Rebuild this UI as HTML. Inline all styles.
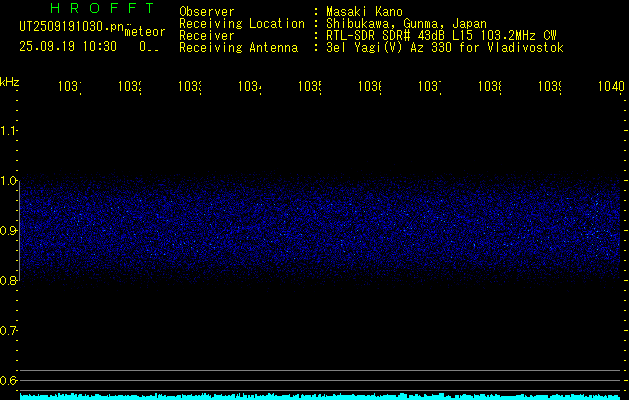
<!DOCTYPE html>
<html><head><meta charset="utf-8"><style>
html,body{margin:0;padding:0;background:#000;}
body{width:629px;height:400px;position:relative;overflow:hidden;}
svg{position:absolute;left:0;top:0;}
</style></head><body>
<svg width="629" height="400" viewBox="0 0 629 400">
<defs>
<linearGradient id="bm" x1="0" y1="160" x2="0" y2="295" gradientUnits="userSpaceOnUse"><stop offset="0.0000" stop-color="rgb(76,76,76)"/><stop offset="0.0296" stop-color="rgb(76,76,76)"/><stop offset="0.0519" stop-color="rgb(82,82,82)"/><stop offset="0.0741" stop-color="rgb(114,114,114)"/><stop offset="0.1037" stop-color="rgb(146,146,146)"/><stop offset="0.1333" stop-color="rgb(170,170,170)"/><stop offset="0.1630" stop-color="rgb(190,190,190)"/><stop offset="0.1926" stop-color="rgb(207,207,207)"/><stop offset="0.2222" stop-color="rgb(221,221,221)"/><stop offset="0.2593" stop-color="rgb(235,235,235)"/><stop offset="0.2963" stop-color="rgb(245,245,245)"/><stop offset="0.3556" stop-color="rgb(255,255,255)"/><stop offset="0.6296" stop-color="rgb(255,255,255)"/><stop offset="0.7037" stop-color="rgb(247,247,247)"/><stop offset="0.7556" stop-color="rgb(233,233,233)"/><stop offset="0.8000" stop-color="rgb(213,213,213)"/><stop offset="0.8444" stop-color="rgb(190,190,190)"/><stop offset="0.8889" stop-color="rgb(162,162,162)"/><stop offset="0.9259" stop-color="rgb(137,137,137)"/><stop offset="0.9630" stop-color="rgb(108,108,108)"/><stop offset="0.9926" stop-color="rgb(76,76,76)"/><stop offset="1.0000" stop-color="rgb(76,76,76)"/></linearGradient>
<filter id="nz" x="20" y="160" width="600" height="135" filterUnits="userSpaceOnUse" color-interpolation-filters="sRGB">
<feTurbulence type="fractalNoise" baseFrequency="1.7" numOctaves="1" seed="5"/>
<feColorMatrix type="matrix" values="1 0 0 0 0  0 0 0 0 0  0 0 0 0 0  0 0 0 0 1" result="t"/>
<feComposite in="t" in2="SourceGraphic" operator="arithmetic" k1="0" k2="1" k3="0.5" k4="-0.944" result="m"/>
<feColorMatrix in="m" type="matrix" values="1.8 0 0 0 0  1.8 0 0 0 0  1.8 0 0 0 0  0 0 0 0 1"/><feComponentTransfer><feFuncR type="table" tableValues="0 0"/><feFuncG type="table" tableValues="0.000 0.000 0.000 0.000 0.000 0.000 0.000 0.000 0.000 0.000 0.000 0.000 0.000 0.000 0.000 0.000 0.000 0.000 0.000 0.000 0.000 0.000 0.000 0.000 0.000 0.000 0.000 0.000 0.000 0.000 0.000 0.000 0.000 0.000 0.000 0.000 0.000 0.000 0.000 0.118 0.510"/><feFuncB type="table" tableValues="0.000 0.196 0.275 0.353 0.439 0.529 0.627 0.745 0.871 0.965 1.000"/></feComponentTransfer>
</filter>
</defs>
<rect x="20" y="160" width="600" height="135" fill="url(#bm)" filter="url(#nz)"/>
<g id="streak"><rect x="597" y="194" width="1" height="1" fill="#0af"/><rect x="596" y="201" width="1" height="1" fill="#07f"/><rect x="597" y="203" width="1" height="1" fill="#0af"/><rect x="596" y="204" width="1" height="1" fill="#08f"/><rect x="597" y="211" width="1" height="1" fill="#0af"/><rect x="596" y="215" width="1" height="1" fill="#07f"/><rect x="592" y="224" width="1" height="1" fill="#08f"/><rect x="597" y="231" width="1" height="1" fill="#0cf"/><rect x="592" y="234" width="1" height="1" fill="#09f"/><rect x="597" y="237" width="1" height="1" fill="#0af"/><rect x="592" y="244" width="1" height="1" fill="#09f"/><rect x="597" y="249" width="1" height="1" fill="#0af"/><rect x="596" y="255" width="1" height="1" fill="#09f"/></g>
<g fill="#ff0"><rect x="16" y="90" width="2" height="1"/><rect x="16" y="100" width="2" height="1"/><rect x="16" y="110" width="2" height="1"/><rect x="16" y="120" width="2" height="1"/><rect x="16" y="130" width="2" height="1"/><rect x="16" y="140" width="2" height="1"/><rect x="16" y="150" width="2" height="1"/><rect x="16" y="160" width="2" height="1"/><rect x="16" y="170" width="2" height="1"/><rect x="16" y="180" width="2" height="1"/><rect x="16" y="190" width="2" height="1"/><rect x="16" y="200" width="2" height="1"/><rect x="16" y="210" width="2" height="1"/><rect x="16" y="220" width="2" height="1"/><rect x="16" y="230" width="2" height="1"/><rect x="16" y="240" width="2" height="1"/><rect x="16" y="250" width="2" height="1"/><rect x="16" y="260" width="2" height="1"/><rect x="16" y="270" width="2" height="1"/><rect x="16" y="280" width="2" height="1"/><rect x="16" y="290" width="2" height="1"/><rect x="16" y="300" width="2" height="1"/><rect x="16" y="310" width="2" height="1"/><rect x="16" y="320" width="2" height="1"/><rect x="16" y="330" width="2" height="1"/><rect x="16" y="340" width="2" height="1"/><rect x="16" y="350" width="2" height="1"/><rect x="16" y="360" width="2" height="1"/><rect x="16" y="370" width="2" height="1"/><rect x="16" y="380" width="2" height="1"/><rect x="16" y="390" width="2" height="1"/><rect x="624" y="100" width="2" height="1"/><rect x="624" y="110" width="2" height="1"/><rect x="624" y="120" width="2" height="1"/><rect x="624" y="130" width="4" height="1"/><rect x="624" y="140" width="2" height="1"/><rect x="624" y="150" width="2" height="1"/><rect x="624" y="160" width="2" height="1"/><rect x="624" y="170" width="2" height="1"/><rect x="624" y="180" width="4" height="1"/><rect x="624" y="190" width="2" height="1"/><rect x="624" y="200" width="2" height="1"/><rect x="624" y="210" width="2" height="1"/><rect x="624" y="220" width="2" height="1"/><rect x="624" y="230" width="4" height="1"/><rect x="624" y="240" width="2" height="1"/><rect x="624" y="250" width="2" height="1"/><rect x="624" y="260" width="2" height="1"/><rect x="624" y="270" width="2" height="1"/><rect x="624" y="280" width="4" height="1"/><rect x="624" y="290" width="2" height="1"/><rect x="624" y="300" width="2" height="1"/><rect x="624" y="310" width="2" height="1"/><rect x="624" y="320" width="2" height="1"/><rect x="624" y="330" width="4" height="1"/><rect x="624" y="340" width="2" height="1"/><rect x="624" y="350" width="2" height="1"/><rect x="624" y="360" width="2" height="1"/><rect x="624" y="370" width="2" height="1"/><rect x="624" y="380" width="4" height="1"/><rect x="624" y="390" width="2" height="1"/><rect x="80" y="93" width="1" height="2"/><rect x="140" y="93" width="1" height="2"/><rect x="200" y="93" width="1" height="2"/><rect x="260" y="93" width="1" height="2"/><rect x="320" y="93" width="1" height="2"/><rect x="380" y="93" width="1" height="2"/><rect x="440" y="93" width="1" height="2"/><rect x="500" y="93" width="1" height="2"/><rect x="560" y="93" width="1" height="2"/><rect x="620" y="93" width="1" height="2"/></g>
<rect x="19" y="181" width="1" height="100" fill="#808080"/>
<g fill="#808080"><rect x="20" y="370" width="600" height="1"/><rect x="20" y="380" width="600" height="1"/><rect x="20" y="390" width="600" height="1"/></g>
<path fill="#0ff" d="M20 400V393H21V395H22V396H23V395H28V396H29V394H30V395H31V396H33V395H35V396H38V394H39V396H40V395H48V397H50V395H52V396H55V394H56V395H57V397H58V393H60V395H62V394H64V396H65V394H67V395H71V393H74V395H75V394H77V397H78V395H79V394H82V396H85V394H86V396H87V395H89V397H91V395H92V396H95V394H99V395H101V396H107V395H108V397H109V394H110V396H115V395H116V396H118V395H123V396H125V395H126V396H127V395H129V396H131V395H137V396H139V397H142V395H143V396H145V397H146V396H150V395H152V396H155V393H157V398H158V395H159V394H160V395H161V394H162V396H164V395H166V397H167V396H175V397H176V396H177V395H181V398H182V394H183V395H186V396H187V395H191V394H192V396H195V395H197V396H198V395H200V396H201V395H202V393H203V395H204V393H206V395H208V394H209V396H210V395H211V398H212V397H214V394H216V395H221V394H222V396H225V395H226V396H228V395H230V396H231V395H232V394H235V398H236V396H237V394H238V396H239V393H240V397H243V393H244V395H247V398H248V395H250V397H251V395H254V398H255V394H257V396H260V395H261V396H262V395H264V396H266V395H268V393H270V394H271V395H272V394H273V393H274V396H275V395H277V396H282V395H289V394H290V397H293V395H294V396H295V395H297V394H299V398H301V395H302V394H303V395H304V396H305V395H311V397H312V395H314V394H316V397H318V395H319V394H321V397H322V396H324V394H325V397H326V395H327V396H333V394H335V395H336V396H337V395H340V393H341V395H352V394H354V395H355V396H357V395H365V396H367V395H370V396H371V395H374V393H375V396H376V397H377V396H379V397H380V395H381V396H383V395H387V394H388V395H396V397H398V395H400V393H404V394H407V398H409V395H413V396H415V394H418V396H419V395H420V396H421V397H424V394H426V395H427V396H432V394H433V395H439V393H444V397H446V396H448V395H449V396H451V398H455V395H459V398H460V395H461V396H462V395H463V394H466V395H471V396H473V398H474V394H475V395H479V396H480V394H485V396H486V397H487V395H489V397H490V395H491V394H492V395H493V396H495V394H497V395H500V397H501V396H516V395H521V394H524V397H525V395H526V396H527V397H530V395H532V396H533V397H534V396H536V395H548V398H550V396H552V395H556V394H558V395H560V396H561V395H563V397H565V395H570V397H571V394H574V395H580V394H581V395H583V394H584V397H585V396H587V397H589V395H592V398H593V395H594V396H595V395H597V396H598V394H599V395H600V396H603V397H604V396H605V395H606V396H607V398H608V395H612V396H614V395H618V397H620V400Z"/>
<g fill="#0f0" shape-rendering="crispEdges"><rect x="51" y="3" width="1" height="10"/><rect x="58" y="3" width="1" height="10"/><rect x="52" y="7" width="6" height="1"/><rect x="71" y="3" width="1" height="10"/><rect x="72" y="3" width="5" height="1"/><rect x="77" y="4" width="1" height="4"/><rect x="72" y="8" width="5" height="1"/><rect x="75" y="9" width="1" height="1"/><rect x="76" y="10" width="1" height="2"/><rect x="77" y="12" width="1" height="1"/><rect x="92" y="3" width="5" height="1"/><rect x="91" y="4" width="1" height="1"/><rect x="97" y="4" width="1" height="1"/><rect x="90" y="5" width="1" height="6"/><rect x="98" y="5" width="1" height="6"/><rect x="91" y="11" width="1" height="1"/><rect x="97" y="11" width="1" height="1"/><rect x="92" y="12" width="5" height="1"/><rect x="111" y="3" width="1" height="10"/><rect x="112" y="3" width="6" height="1"/><rect x="112" y="7" width="5" height="1"/><rect x="129" y="3" width="1" height="10"/><rect x="130" y="3" width="6" height="1"/><rect x="130" y="7" width="5" height="1"/><rect x="146" y="3" width="7" height="1"/><rect x="149" y="4" width="1" height="9"/></g>
<path fill="#ff0" shape-rendering="crispEdges" d="M182 6h2v1h-2zM187 6h1v4h-1zM327 6h1v2h-1zM331 6h1v2h-1zM355 6h1v6h-1zM364 6h1v2h-1zM376 6h1v6h-1zM380 6h1v2h-1zM181 7h1v1h-1zM184 7h1v1h-1zM180 8h1v6h-1zM185 8h1v6h-1zM315 8h2v2h-2zM327 8h2v4h-2zM330 8h2v4h-2zM379 8h1v2h-1zM189 9h2v1h-2zM195 9h3v1h-3zM202 9h3v1h-3zM209 9h1v1h-1zM211 9h2v1h-2zM215 9h1v2h-1zM219 9h1v2h-1zM223 9h3v1h-3zM230 9h1v1h-1zM232 9h2v1h-2zM335 9h3v1h-3zM342 9h3v1h-3zM349 9h3v1h-3zM359 9h1v1h-1zM364 9h1v7h-1zM384 9h3v1h-3zM390 9h1v1h-1zM392 9h2v1h-2zM398 9h3v1h-3zM187 10h2v1h-2zM191 10h1v5h-1zM194 10h1v2h-1zM198 10h1v1h-1zM201 10h1v2h-1zM205 10h1v2h-1zM209 10h2v1h-2zM222 10h1v2h-1zM226 10h1v2h-1zM230 10h2v1h-2zM334 10h1v1h-1zM338 10h1v2h-1zM341 10h1v2h-1zM345 10h1v1h-1zM348 10h1v1h-1zM352 10h1v2h-1zM358 10h1v1h-1zM378 10h1v2h-1zM383 10h1v1h-1zM387 10h1v2h-1zM390 10h2v1h-2zM394 10h1v6h-1zM397 10h1v5h-1zM401 10h1v5h-1zM187 11h1v3h-1zM209 11h1v5h-1zM216 11h1v3h-1zM218 11h1v3h-1zM230 11h1v5h-1zM357 11h1v1h-1zM390 11h1v5h-1zM195 12h3v1h-3zM201 12h5v1h-5zM222 12h5v1h-5zM327 12h1v4h-1zM329 12h1v4h-1zM331 12h1v4h-1zM335 12h4v1h-4zM342 12h3v1h-3zM349 12h4v1h-4zM355 12h2v1h-2zM376 12h2v1h-2zM379 12h1v1h-1zM384 12h4v1h-4zM198 13h1v2h-1zM201 13h1v2h-1zM222 13h1v2h-1zM315 13h2v2h-2zM334 13h1v2h-1zM338 13h1v2h-1zM345 13h1v2h-1zM348 13h1v2h-1zM352 13h1v2h-1zM355 13h1v3h-1zM357 13h1v1h-1zM376 13h1v3h-1zM380 13h1v2h-1zM383 13h1v2h-1zM387 13h1v2h-1zM181 14h1v1h-1zM184 14h1v1h-1zM187 14h2v1h-2zM194 14h1v1h-1zM205 14h1v1h-1zM217 14h1v2h-1zM226 14h1v1h-1zM341 14h1v1h-1zM358 14h1v1h-1zM182 15h2v1h-2zM187 15h1v1h-1zM189 15h2v1h-2zM195 15h3v1h-3zM202 15h3v1h-3zM223 15h3v1h-3zM335 15h3v1h-3zM339 15h1v1h-1zM342 15h3v1h-3zM349 15h3v1h-3zM353 15h1v1h-1zM359 15h1v1h-1zM381 15h1v1h-1zM384 15h3v1h-3zM388 15h1v1h-1zM398 15h3v1h-3zM180 18h4v1h-4zM210 18h1v2h-1zM224 18h1v2h-1zM250 18h1v9h-1zM279 18h1v3h-1zM287 18h1v2h-1zM328 18h3v1h-3zM334 18h1v4h-1zM343 18h1v2h-1zM348 18h1v4h-1zM362 18h1v6h-1zM406 18h2v1h-2zM457 18h1v9h-1zM180 19h1v4h-1zM184 19h1v4h-1zM327 19h1v3h-1zM331 19h1v2h-1zM405 19h1v1h-1zM408 19h1v1h-1zM315 20h2v2h-2zM404 20h1v6h-1zM409 20h1v1h-1zM20 21h1v9h-1zM24 21h1v9h-1zM27 21h5v1h-5zM35 21h3v1h-3zM41 21h5v1h-5zM49 21h3v1h-3zM56 21h3v1h-3zM64 21h1v1h-1zM70 21h3v1h-3zM78 21h1v1h-1zM84 21h3v1h-3zM91 21h3v1h-3zM98 21h3v1h-3zM188 21h3v1h-3zM195 21h3v1h-3zM202 21h3v1h-3zM210 21h1v7h-1zM215 21h1v2h-1zM219 21h1v2h-1zM224 21h1v7h-1zM229 21h1v1h-1zM231 21h2v1h-2zM238 21h2v1h-2zM241 21h1v1h-1zM258 21h3v1h-3zM265 21h3v1h-3zM272 21h3v1h-3zM278 21h3v1h-3zM287 21h1v7h-1zM293 21h3v1h-3zM299 21h1v1h-1zM301 21h2v1h-2zM336 21h2v1h-2zM343 21h1v7h-1zM350 21h2v1h-2zM355 21h1v6h-1zM359 21h1v5h-1zM366 21h1v1h-1zM370 21h3v1h-3zM376 21h1v4h-1zM378 21h1v4h-1zM380 21h1v4h-1zM384 21h3v1h-3zM411 21h1v6h-1zM415 21h1v5h-1zM418 21h1v1h-1zM420 21h2v1h-2zM425 21h2v1h-2zM428 21h1v1h-1zM433 21h3v1h-3zM461 21h3v1h-3zM467 21h1v1h-1zM469 21h2v1h-2zM475 21h3v1h-3zM481 21h1v1h-1zM483 21h2v1h-2zM29 22h1v9h-1zM34 22h1v2h-1zM38 22h1v3h-1zM41 22h1v2h-1zM48 22h1v8h-1zM52 22h1v8h-1zM55 22h1v4h-1zM59 22h1v3h-1zM63 22h2v1h-2zM69 22h1v4h-1zM73 22h1v3h-1zM77 22h2v1h-2zM83 22h1v8h-1zM87 22h1v8h-1zM90 22h1v2h-1zM94 22h1v3h-1zM97 22h1v8h-1zM101 22h1v8h-1zM187 22h1v2h-1zM191 22h1v2h-1zM194 22h1v5h-1zM198 22h1v1h-1zM201 22h1v2h-1zM205 22h1v2h-1zM229 22h2v1h-2zM233 22h1v6h-1zM237 22h1v2h-1zM240 22h1v2h-1zM257 22h1v5h-1zM261 22h1v5h-1zM264 22h1v5h-1zM268 22h1v1h-1zM271 22h1v1h-1zM275 22h1v2h-1zM279 22h1v5h-1zM292 22h1v5h-1zM296 22h1v5h-1zM299 22h2v1h-2zM303 22h1v6h-1zM328 22h2v1h-2zM334 22h2v1h-2zM338 22h1v6h-1zM348 22h2v1h-2zM352 22h1v5h-1zM365 22h1v1h-1zM369 22h1v1h-1zM373 22h1v2h-1zM383 22h1v1h-1zM387 22h1v2h-1zM418 22h2v1h-2zM422 22h1v6h-1zM425 22h1v6h-1zM427 22h1v6h-1zM429 22h1v6h-1zM432 22h1v1h-1zM436 22h1v2h-1zM460 22h1v1h-1zM464 22h1v2h-1zM467 22h2v1h-2zM471 22h1v4h-1zM474 22h1v1h-1zM478 22h1v2h-1zM481 22h2v1h-2zM485 22h1v6h-1zM64 23h1v8h-1zM78 23h1v8h-1zM180 23h4v1h-4zM216 23h1v3h-1zM218 23h1v3h-1zM229 23h1v5h-1zM299 23h1v5h-1zM330 23h1v1h-1zM334 23h1v5h-1zM348 23h1v3h-1zM364 23h1v1h-1zM407 23h3v1h-3zM418 23h1v5h-1zM467 23h1v2h-1zM481 23h1v5h-1zM41 24h4v1h-4zM111 24h1v1h-1zM113 24h2v1h-2zM118 24h1v1h-1zM120 24h2v1h-2zM127 24h2v1h-2zM130 24h1v1h-1zM180 24h1v4h-1zM183 24h1v2h-1zM187 24h5v1h-5zM201 24h5v1h-5zM238 24h2v1h-2zM272 24h4v1h-4zM327 24h1v3h-1zM331 24h1v3h-1zM362 24h2v1h-2zM370 24h4v1h-4zM384 24h4v1h-4zM409 24h1v2h-1zM433 24h4v1h-4zM453 24h1v3h-1zM461 24h4v1h-4zM475 24h4v1h-4zM37 25h1v2h-1zM45 25h1v5h-1zM58 25h2v1h-2zM72 25h2v1h-2zM91 25h3v1h-3zM111 25h2v1h-2zM115 25h1v4h-1zM118 25h2v1h-2zM122 25h1v6h-1zM187 25h1v2h-1zM201 25h1v2h-1zM237 25h1v1h-1zM271 25h1v2h-1zM275 25h1v2h-1zM315 25h2v2h-2zM362 25h1v3h-1zM364 25h1v1h-1zM369 25h1v2h-1zM373 25h1v2h-1zM377 25h1v3h-1zM379 25h1v3h-1zM383 25h1v2h-1zM387 25h1v2h-1zM392 25h2v2h-2zM432 25h1v2h-1zM436 25h1v2h-1zM441 25h2v2h-2zM460 25h1v2h-1zM464 25h1v2h-1zM467 25h2v1h-2zM474 25h1v2h-1zM478 25h1v2h-1zM56 26h2v1h-2zM59 26h1v4h-1zM70 26h2v1h-2zM73 26h1v4h-1zM94 26h1v4h-1zM111 26h1v2h-1zM118 26h1v5h-1zM140 26h1v3h-1zM184 26h1v2h-1zM191 26h1v1h-1zM198 26h1v1h-1zM205 26h1v1h-1zM217 26h1v2h-1zM237 26h4v1h-4zM268 26h1v1h-1zM348 26h2v1h-2zM358 26h2v1h-2zM365 26h1v1h-1zM405 26h1v1h-1zM408 26h2v1h-2zM414 26h2v1h-2zM467 26h1v3h-1zM469 26h2v1h-2zM36 27h1v1h-1zM188 27h3v1h-3zM195 27h3v1h-3zM202 27h3v1h-3zM236 27h1v1h-1zM241 27h1v1h-1zM250 27h6v1h-6zM258 27h3v1h-3zM265 27h3v1h-3zM272 27h3v1h-3zM276 27h1v1h-1zM280 27h2v1h-2zM293 27h3v1h-3zM328 27h3v1h-3zM348 27h1v1h-1zM350 27h2v1h-2zM356 27h2v1h-2zM359 27h1v1h-1zM366 27h1v1h-1zM370 27h3v1h-3zM374 27h1v1h-1zM384 27h3v1h-3zM388 27h1v1h-1zM393 27h1v1h-1zM406 27h2v1h-2zM409 27h1v1h-1zM412 27h2v1h-2zM415 27h1v1h-1zM433 27h3v1h-3zM437 27h1v1h-1zM442 27h1v1h-1zM454 27h3v1h-3zM461 27h3v1h-3zM465 27h1v1h-1zM475 27h3v1h-3zM479 27h1v1h-1zM35 28h1v1h-1zM41 28h1v2h-1zM55 28h1v2h-1zM69 28h1v2h-1zM90 28h1v2h-1zM106 28h2v2h-2zM111 28h2v1h-2zM237 28h4v1h-4zM392 28h1v1h-1zM441 28h1v1h-1zM34 29h1v1h-1zM111 29h1v3h-1zM113 29h2v1h-2zM125 29h2v1h-2zM128 29h1v1h-1zM133 29h3v1h-3zM139 29h3v1h-3zM147 29h3v1h-3zM154 29h3v1h-3zM161 29h1v1h-1zM163 29h2v1h-2zM405 29h1v3h-1zM408 29h1v3h-1zM21 30h3v1h-3zM34 30h5v1h-5zM42 30h3v1h-3zM49 30h3v1h-3zM56 30h3v1h-3zM70 30h3v1h-3zM84 30h3v1h-3zM91 30h3v1h-3zM98 30h3v1h-3zM125 30h1v6h-1zM127 30h1v6h-1zM129 30h1v6h-1zM132 30h1v2h-1zM136 30h1v2h-1zM140 30h1v5h-1zM146 30h1v2h-1zM150 30h1v2h-1zM153 30h1v5h-1zM157 30h1v5h-1zM161 30h2v1h-2zM180 30h4v1h-4zM210 30h1v2h-1zM327 30h4v1h-4zM334 30h5v1h-5zM341 30h1v9h-1zM356 30h3v1h-3zM362 30h3v1h-3zM369 30h4v1h-4zM384 30h3v1h-3zM390 30h3v1h-3zM397 30h4v1h-4zM422 30h1v1h-1zM426 30h3v1h-3zM436 30h1v4h-1zM439 30h4v1h-4zM453 30h1v9h-1zM462 30h1v1h-1zM467 30h5v1h-5zM483 30h1v1h-1zM489 30h3v1h-3zM496 30h3v1h-3zM510 30h3v1h-3zM516 30h1v2h-1zM520 30h1v2h-1zM523 30h1v4h-1zM527 30h1v4h-1zM546 30h2v1h-2zM551 30h1v6h-1zM553 30h1v6h-1zM555 30h1v6h-1zM161 31h1v5h-1zM180 31h1v4h-1zM184 31h1v4h-1zM327 31h1v4h-1zM331 31h1v4h-1zM336 31h1v9h-1zM355 31h1v3h-1zM359 31h1v2h-1zM362 31h1v8h-1zM365 31h1v1h-1zM369 31h1v4h-1zM373 31h1v4h-1zM383 31h1v3h-1zM387 31h1v2h-1zM390 31h1v8h-1zM393 31h1v1h-1zM397 31h1v4h-1zM401 31h1v4h-1zM421 31h2v2h-2zM425 31h1v2h-1zM429 31h1v3h-1zM439 31h1v3h-1zM443 31h1v3h-1zM461 31h2v1h-2zM467 31h1v2h-1zM482 31h2v1h-2zM488 31h1v8h-1zM492 31h1v8h-1zM495 31h1v2h-1zM499 31h1v3h-1zM509 31h1v2h-1zM513 31h1v3h-1zM545 31h1v1h-1zM548 31h1v1h-1zM132 32h5v1h-5zM146 32h5v1h-5zM315 32h2v2h-2zM366 32h1v6h-1zM394 32h1v6h-1zM404 32h6v1h-6zM462 32h1v8h-1zM483 32h1v8h-1zM516 32h2v4h-2zM519 32h2v4h-2zM544 32h1v6h-1zM549 32h1v2h-1zM132 33h1v2h-1zM146 33h1v2h-1zM188 33h3v1h-3zM195 33h3v1h-3zM202 33h3v1h-3zM210 33h1v7h-1zM215 33h1v2h-1zM219 33h1v2h-1zM223 33h3v1h-3zM230 33h1v1h-1zM232 33h2v1h-2zM405 33h1v4h-1zM408 33h1v4h-1zM420 33h1v2h-1zM422 33h1v4h-1zM433 33h2v1h-2zM467 33h4v1h-4zM530 33h5v1h-5zM136 34h1v1h-1zM150 34h1v1h-1zM187 34h1v2h-1zM191 34h1v2h-1zM194 34h1v5h-1zM198 34h1v1h-1zM201 34h1v2h-1zM205 34h1v2h-1zM222 34h1v2h-1zM226 34h1v2h-1zM230 34h2v1h-2zM356 34h2v1h-2zM384 34h2v1h-2zM426 34h3v1h-3zM432 34h1v5h-1zM435 34h2v1h-2zM439 34h4v1h-4zM471 34h1v5h-1zM496 34h3v1h-3zM512 34h1v2h-1zM523 34h5v1h-5zM534 34h1v1h-1zM133 35h3v1h-3zM141 35h2v1h-2zM147 35h3v1h-3zM154 35h3v1h-3zM180 35h4v1h-4zM216 35h1v3h-1zM218 35h1v3h-1zM230 35h1v5h-1zM327 35h4v1h-4zM348 35h5v1h-5zM358 35h1v1h-1zM369 35h4v1h-4zM386 35h1v1h-1zM397 35h4v1h-4zM419 35h1v2h-1zM429 35h1v4h-1zM436 35h1v3h-1zM439 35h1v4h-1zM443 35h1v4h-1zM499 35h1v4h-1zM523 35h1v5h-1zM527 35h1v5h-1zM533 35h1v1h-1zM180 36h1v4h-1zM183 36h1v2h-1zM187 36h5v1h-5zM201 36h5v1h-5zM222 36h5v1h-5zM327 36h1v4h-1zM330 36h1v2h-1zM355 36h1v3h-1zM359 36h1v3h-1zM369 36h1v4h-1zM372 36h1v2h-1zM383 36h1v3h-1zM387 36h1v3h-1zM397 36h1v4h-1zM400 36h1v2h-1zM511 36h1v1h-1zM516 36h1v4h-1zM518 36h1v4h-1zM520 36h1v4h-1zM532 36h1v1h-1zM549 36h1v2h-1zM552 36h1v4h-1zM554 36h1v4h-1zM187 37h1v2h-1zM201 37h1v2h-1zM222 37h1v2h-1zM315 37h2v2h-2zM404 37h6v1h-6zM418 37h6v1h-6zM425 37h1v2h-1zM467 37h1v2h-1zM495 37h1v2h-1zM504 37h2v2h-2zM510 37h1v1h-1zM531 37h1v1h-1zM184 38h1v2h-1zM191 38h1v1h-1zM198 38h1v1h-1zM205 38h1v1h-1zM217 38h1v2h-1zM226 38h1v1h-1zM331 38h1v2h-1zM365 38h1v1h-1zM373 38h1v2h-1zM393 38h1v1h-1zM401 38h1v2h-1zM405 38h1v3h-1zM408 38h1v3h-1zM422 38h1v2h-1zM435 38h2v1h-2zM509 38h1v1h-1zM530 38h1v1h-1zM545 38h1v1h-1zM548 38h1v1h-1zM188 39h3v1h-3zM195 39h3v1h-3zM202 39h3v1h-3zM223 39h3v1h-3zM341 39h6v1h-6zM356 39h3v1h-3zM362 39h3v1h-3zM384 39h3v1h-3zM390 39h3v1h-3zM426 39h3v1h-3zM433 39h2v1h-2zM436 39h1v1h-1zM439 39h4v1h-4zM453 39h6v1h-6zM468 39h3v1h-3zM489 39h3v1h-3zM496 39h3v1h-3zM509 39h5v1h-5zM530 39h5v1h-5zM546 39h2v1h-2zM21 41h3v1h-3zM27 41h5v1h-5zM42 41h3v1h-3zM49 41h3v1h-3zM64 41h1v1h-1zM70 41h3v1h-3zM85 41h1v1h-1zM91 41h3v1h-3zM105 41h3v1h-3zM112 41h3v1h-3zM141 41h3v1h-3zM387 41h1v1h-1zM398 41h1v1h-1zM20 42h1v2h-1zM24 42h1v3h-1zM27 42h1v2h-1zM41 42h1v8h-1zM45 42h1v8h-1zM48 42h1v4h-1zM52 42h1v3h-1zM63 42h2v1h-2zM69 42h1v4h-1zM73 42h1v3h-1zM84 42h2v1h-2zM90 42h1v8h-1zM94 42h1v8h-1zM104 42h1v2h-1zM108 42h1v3h-1zM111 42h1v8h-1zM115 42h1v8h-1zM140 42h1v8h-1zM144 42h1v8h-1zM180 42h4v1h-4zM210 42h1v2h-1zM224 42h1v2h-1zM252 42h1v2h-1zM265 42h1v3h-1zM328 42h3v1h-3zM343 42h1v10h-1zM355 42h1v3h-1zM359 42h1v3h-1zM378 42h1v2h-1zM386 42h1v2h-1zM390 42h1v4h-1zM394 42h1v4h-1zM399 42h1v2h-1zM413 42h1v2h-1zM433 42h3v1h-3zM440 42h3v1h-3zM447 42h3v1h-3zM462 42h2v1h-2zM488 42h1v4h-1zM492 42h1v4h-1zM497 42h1v10h-1zM513 42h1v4h-1zM518 42h1v2h-1zM545 42h1v3h-1zM558 42h1v6h-1zM64 43h1v8h-1zM85 43h1v8h-1zM99 43h2v2h-2zM180 43h1v4h-1zM184 43h1v4h-1zM327 43h1v2h-1zM331 43h1v3h-1zM432 43h1v2h-1zM436 43h1v3h-1zM439 43h1v2h-1zM443 43h1v3h-1zM446 43h1v8h-1zM450 43h1v8h-1zM461 43h1v2h-1zM27 44h4v1h-4zM251 44h1v4h-1zM253 44h1v4h-1zM315 44h2v2h-2zM385 44h1v6h-1zM400 44h1v6h-1zM412 44h1v4h-1zM414 44h1v4h-1zM23 45h1v2h-1zM31 45h1v5h-1zM51 45h2v1h-2zM72 45h2v1h-2zM105 45h3v1h-3zM188 45h3v1h-3zM195 45h3v1h-3zM202 45h3v1h-3zM210 45h1v7h-1zM215 45h1v2h-1zM219 45h1v2h-1zM224 45h1v7h-1zM229 45h1v1h-1zM231 45h2v1h-2zM238 45h2v1h-2zM241 45h1v1h-1zM257 45h1v1h-1zM259 45h2v1h-2zM264 45h3v1h-3zM272 45h3v1h-3zM278 45h1v1h-1zM280 45h2v1h-2zM285 45h1v1h-1zM287 45h2v1h-2zM293 45h3v1h-3zM335 45h3v1h-3zM356 45h1v2h-1zM358 45h1v2h-1zM363 45h3v1h-3zM371 45h2v1h-2zM374 45h1v1h-1zM378 45h1v7h-1zM418 45h5v1h-5zM460 45h4v1h-4zM468 45h3v1h-3zM475 45h1v1h-1zM477 45h2v1h-2zM503 45h3v1h-3zM510 45h2v1h-2zM518 45h1v7h-1zM523 45h1v2h-1zM527 45h1v2h-1zM531 45h3v1h-3zM538 45h3v1h-3zM544 45h3v1h-3zM552 45h3v1h-3zM562 45h1v1h-1zM49 46h2v1h-2zM52 46h1v4h-1zM70 46h2v1h-2zM73 46h1v4h-1zM108 46h1v4h-1zM187 46h1v2h-1zM191 46h1v2h-1zM194 46h1v5h-1zM198 46h1v1h-1zM201 46h1v2h-1zM205 46h1v2h-1zM229 46h2v1h-2zM233 46h1v6h-1zM237 46h1v2h-1zM240 46h1v2h-1zM257 46h2v1h-2zM261 46h1v6h-1zM265 46h1v5h-1zM271 46h1v2h-1zM275 46h1v2h-1zM278 46h2v1h-2zM282 46h1v6h-1zM285 46h2v1h-2zM289 46h1v6h-1zM292 46h1v1h-1zM296 46h1v2h-1zM328 46h3v1h-3zM334 46h1v2h-1zM338 46h1v2h-1zM362 46h1v1h-1zM366 46h1v2h-1zM370 46h1v2h-1zM373 46h1v2h-1zM391 46h1v4h-1zM393 46h1v4h-1zM422 46h1v1h-1zM433 46h3v1h-3zM440 46h3v1h-3zM461 46h1v6h-1zM467 46h1v5h-1zM471 46h1v5h-1zM475 46h2v1h-2zM489 46h1v4h-1zM491 46h1v4h-1zM502 46h1v1h-1zM506 46h1v2h-1zM509 46h1v5h-1zM512 46h2v1h-2zM530 46h1v5h-1zM534 46h1v5h-1zM537 46h1v2h-1zM541 46h1v1h-1zM545 46h1v5h-1zM551 46h1v5h-1zM555 46h1v5h-1zM561 46h1v1h-1zM22 47h1v1h-1zM180 47h4v1h-4zM216 47h1v3h-1zM218 47h1v3h-1zM229 47h1v5h-1zM257 47h1v5h-1zM278 47h1v5h-1zM285 47h1v5h-1zM331 47h1v4h-1zM357 47h1v5h-1zM421 47h1v1h-1zM436 47h1v4h-1zM443 47h1v4h-1zM475 47h1v5h-1zM513 47h1v3h-1zM524 47h1v3h-1zM526 47h1v3h-1zM560 47h1v1h-1zM21 48h1v1h-1zM27 48h1v2h-1zM36 48h2v2h-2zM48 48h1v2h-1zM57 48h2v2h-2zM69 48h1v2h-1zM99 48h2v2h-2zM104 48h1v2h-1zM180 48h1v4h-1zM183 48h1v2h-1zM187 48h5v1h-5zM201 48h5v1h-5zM238 48h2v1h-2zM250 48h1v1h-1zM254 48h1v1h-1zM271 48h5v1h-5zM293 48h4v1h-4zM334 48h5v1h-5zM363 48h4v1h-4zM371 48h2v1h-2zM411 48h1v1h-1zM415 48h1v1h-1zM420 48h1v1h-1zM503 48h4v1h-4zM538 48h3v1h-3zM558 48h2v1h-2zM20 49h1v1h-1zM187 49h1v2h-1zM201 49h1v2h-1zM237 49h1v1h-1zM250 49h5v1h-5zM271 49h1v2h-1zM292 49h1v2h-1zM296 49h1v2h-1zM315 49h2v2h-2zM327 49h1v2h-1zM334 49h1v2h-1zM362 49h1v2h-1zM366 49h1v2h-1zM370 49h1v1h-1zM411 49h5v1h-5zM419 49h1v1h-1zM432 49h1v2h-1zM439 49h1v2h-1zM502 49h1v2h-1zM506 49h1v2h-1zM541 49h1v2h-1zM558 49h1v3h-1zM560 49h1v1h-1zM20 50h5v1h-5zM28 50h3v1h-3zM42 50h3v1h-3zM49 50h3v1h-3zM70 50h3v1h-3zM91 50h3v1h-3zM105 50h3v1h-3zM112 50h3v1h-3zM141 50h3v1h-3zM148 50h3v1h-3zM155 50h3v1h-3zM184 50h1v2h-1zM191 50h1v1h-1zM198 50h1v1h-1zM205 50h1v1h-1zM217 50h1v2h-1zM237 50h4v1h-4zM250 50h1v2h-1zM254 50h1v2h-1zM275 50h1v1h-1zM338 50h1v1h-1zM370 50h4v1h-4zM386 50h1v2h-1zM392 50h1v2h-1zM399 50h1v2h-1zM411 50h1v2h-1zM415 50h1v2h-1zM418 50h1v1h-1zM490 50h1v2h-1zM512 50h2v1h-2zM525 50h1v2h-1zM537 50h1v1h-1zM561 50h1v1h-1zM188 51h3v1h-3zM195 51h3v1h-3zM202 51h3v1h-3zM236 51h1v1h-1zM241 51h1v1h-1zM266 51h2v1h-2zM272 51h3v1h-3zM293 51h3v1h-3zM297 51h1v1h-1zM328 51h3v1h-3zM335 51h3v1h-3zM363 51h3v1h-3zM367 51h1v1h-1zM369 51h1v1h-1zM374 51h1v1h-1zM418 51h5v1h-5zM433 51h3v1h-3zM440 51h3v1h-3zM447 51h3v1h-3zM468 51h3v1h-3zM503 51h3v1h-3zM507 51h1v1h-1zM510 51h2v1h-2zM513 51h1v1h-1zM531 51h3v1h-3zM538 51h3v1h-3zM546 51h2v1h-2zM552 51h3v1h-3zM562 51h1v1h-1zM237 52h4v1h-4zM370 52h4v1h-4zM387 52h1v1h-1zM398 52h1v1h-1zM0 77h1v6h-1zM6 77h1v4h-1zM12 77h1v4h-1zM4 80h1v1h-1zM14 80h5v1h-5zM3 81h1v1h-1zM6 81h7v1h-7zM17 81h1v1h-1zM60 81h1v1h-1zM66 81h3v1h-3zM73 81h3v1h-3zM120 81h1v1h-1zM126 81h3v1h-3zM133 81h3v1h-3zM140 81h1v1h-1zM180 81h1v1h-1zM186 81h3v1h-3zM193 81h3v1h-3zM200 81h1v1h-1zM240 81h1v1h-1zM246 81h3v1h-3zM253 81h3v1h-3zM300 81h1v1h-1zM306 81h3v1h-3zM313 81h3v1h-3zM319 81h2v1h-2zM360 81h1v1h-1zM366 81h3v1h-3zM373 81h3v1h-3zM380 81h1v1h-1zM420 81h1v1h-1zM426 81h3v1h-3zM433 81h3v1h-3zM439 81h2v1h-2zM480 81h1v1h-1zM486 81h3v1h-3zM493 81h3v1h-3zM500 81h1v1h-1zM540 81h1v1h-1zM546 81h3v1h-3zM553 81h3v1h-3zM560 81h1v1h-1zM600 81h1v1h-1zM606 81h3v1h-3zM616 81h1v1h-1zM620 81h3v1h-3zM2 82h1v1h-1zM6 82h1v4h-1zM12 82h1v4h-1zM16 82h1v1h-1zM59 82h2v1h-2zM65 82h1v8h-1zM69 82h1v8h-1zM72 82h1v2h-1zM76 82h1v3h-1zM80 82h1v1h-1zM119 82h2v1h-2zM125 82h1v8h-1zM129 82h1v8h-1zM132 82h1v2h-1zM136 82h1v3h-1zM139 82h1v3h-1zM179 82h2v1h-2zM185 82h1v8h-1zM189 82h1v8h-1zM192 82h1v2h-1zM196 82h1v3h-1zM199 82h1v2h-1zM239 82h2v1h-2zM245 82h1v8h-1zM249 82h1v8h-1zM252 82h1v2h-1zM256 82h1v3h-1zM299 82h2v1h-2zM305 82h1v8h-1zM309 82h1v8h-1zM312 82h1v2h-1zM316 82h1v3h-1zM319 82h1v2h-1zM359 82h2v1h-2zM365 82h1v8h-1zM369 82h1v8h-1zM372 82h1v2h-1zM376 82h1v3h-1zM379 82h1v4h-1zM419 82h2v1h-2zM425 82h1v8h-1zM429 82h1v8h-1zM432 82h1v2h-1zM436 82h1v3h-1zM479 82h2v1h-2zM485 82h1v8h-1zM489 82h1v8h-1zM492 82h1v2h-1zM496 82h1v3h-1zM499 82h1v3h-1zM539 82h2v1h-2zM545 82h1v8h-1zM549 82h1v8h-1zM552 82h1v2h-1zM556 82h1v3h-1zM559 82h1v4h-1zM599 82h2v1h-2zM605 82h1v8h-1zM609 82h1v8h-1zM615 82h2v2h-2zM619 82h1v8h-1zM623 82h1v8h-1zM0 83h2v1h-2zM3 83h1v2h-1zM15 83h1v1h-1zM60 83h1v8h-1zM120 83h1v8h-1zM180 83h1v8h-1zM240 83h1v8h-1zM300 83h1v8h-1zM360 83h1v8h-1zM420 83h1v8h-1zM480 83h1v8h-1zM540 83h1v8h-1zM600 83h1v8h-1zM0 84h1v2h-1zM14 84h1v1h-1zM319 84h2v1h-2zM614 84h1v2h-1zM616 84h1v4h-1zM4 85h1v1h-1zM14 85h5v1h-5zM73 85h3v1h-3zM133 85h3v1h-3zM193 85h3v1h-3zM200 85h1v1h-1zM253 85h3v1h-3zM313 85h3v1h-3zM319 85h1v1h-1zM373 85h3v1h-3zM433 85h3v1h-3zM493 85h3v1h-3zM500 85h1v1h-1zM553 85h3v1h-3zM76 86h1v4h-1zM136 86h1v4h-1zM196 86h1v4h-1zM256 86h1v4h-1zM260 86h1v2h-1zM316 86h1v4h-1zM376 86h1v4h-1zM379 86h2v1h-2zM436 86h1v4h-1zM496 86h1v4h-1zM499 86h1v4h-1zM556 86h1v4h-1zM560 86h1v1h-1zM613 86h1v2h-1zM379 87h1v3h-1zM72 88h1v2h-1zM132 88h1v2h-1zM140 88h1v1h-1zM192 88h1v2h-1zM199 88h1v2h-1zM252 88h1v2h-1zM259 88h2v1h-2zM312 88h1v2h-1zM319 88h1v2h-1zM372 88h1v2h-1zM432 88h1v2h-1zM492 88h1v2h-1zM552 88h1v2h-1zM559 88h1v2h-1zM612 88h6v1h-6zM139 89h1v1h-1zM616 89h1v2h-1zM66 90h3v1h-3zM73 90h3v1h-3zM126 90h3v1h-3zM133 90h3v1h-3zM139 90h2v1h-2zM186 90h3v1h-3zM193 90h3v1h-3zM200 90h1v1h-1zM246 90h3v1h-3zM253 90h3v1h-3zM306 90h3v1h-3zM313 90h3v1h-3zM320 90h1v1h-1zM366 90h3v1h-3zM373 90h3v1h-3zM380 90h1v1h-1zM426 90h3v1h-3zM433 90h3v1h-3zM486 90h3v1h-3zM493 90h3v1h-3zM500 90h1v1h-1zM546 90h3v1h-3zM553 90h3v1h-3zM560 90h1v1h-1zM606 90h3v1h-3zM620 90h3v1h-3zM3 126h1v1h-1zM13 126h1v1h-1zM1 127h3v1h-3zM11 127h3v1h-3zM3 128h1v7h-1zM13 128h1v7h-1zM8 134h1v1h-1zM3 176h1v1h-1zM12 176h2v1h-2zM1 177h3v1h-3zM11 177h1v1h-1zM14 177h1v1h-1zM3 178h1v7h-1zM10 178h1v5h-1zM15 178h1v5h-1zM11 183h1v1h-1zM14 183h1v1h-1zM8 184h1v1h-1zM12 184h2v1h-2zM2 226h2v1h-2zM11 226h3v1h-3zM1 227h1v1h-1zM4 227h1v1h-1zM10 227h1v4h-1zM14 227h1v1h-1zM0 228h1v5h-1zM5 228h1v5h-1zM15 228h1v2h-1zM14 230h2v1h-2zM11 231h3v1h-3zM15 231h1v2h-1zM1 233h1v1h-1zM4 233h1v1h-1zM10 233h1v1h-1zM14 233h1v1h-1zM2 234h2v1h-2zM8 234h1v1h-1zM11 234h3v1h-3zM2 276h2v1h-2zM11 276h4v1h-4zM1 277h1v1h-1zM4 277h1v1h-1zM10 277h1v3h-1zM15 277h1v3h-1zM0 278h1v5h-1zM5 278h1v5h-1zM11 280h4v1h-4zM10 281h1v3h-1zM15 281h1v3h-1zM1 283h1v1h-1zM4 283h1v1h-1zM2 284h2v1h-2zM8 284h1v1h-1zM11 284h4v1h-4zM2 326h2v1h-2zM10 326h6v1h-6zM1 327h1v1h-1zM4 327h1v1h-1zM15 327h1v1h-1zM0 328h1v5h-1zM5 328h1v5h-1zM14 328h1v2h-1zM13 330h1v3h-1zM1 333h1v1h-1zM4 333h1v1h-1zM12 333h1v2h-1zM2 334h2v1h-2zM8 334h1v1h-1zM2 376h2v1h-2zM12 376h3v1h-3zM1 377h1v1h-1zM4 377h1v1h-1zM11 377h1v1h-1zM15 377h1v1h-1zM0 378h1v5h-1zM5 378h1v5h-1zM10 378h1v2h-1zM12 379h3v1h-3zM10 380h2v1h-2zM15 380h1v3h-1zM10 381h1v2h-1zM1 383h1v1h-1zM4 383h1v1h-1zM11 383h1v1h-1zM14 383h1v1h-1zM2 384h2v1h-2zM8 384h1v1h-1zM12 384h2v1h-2z"/>
</svg>


</body></html>
